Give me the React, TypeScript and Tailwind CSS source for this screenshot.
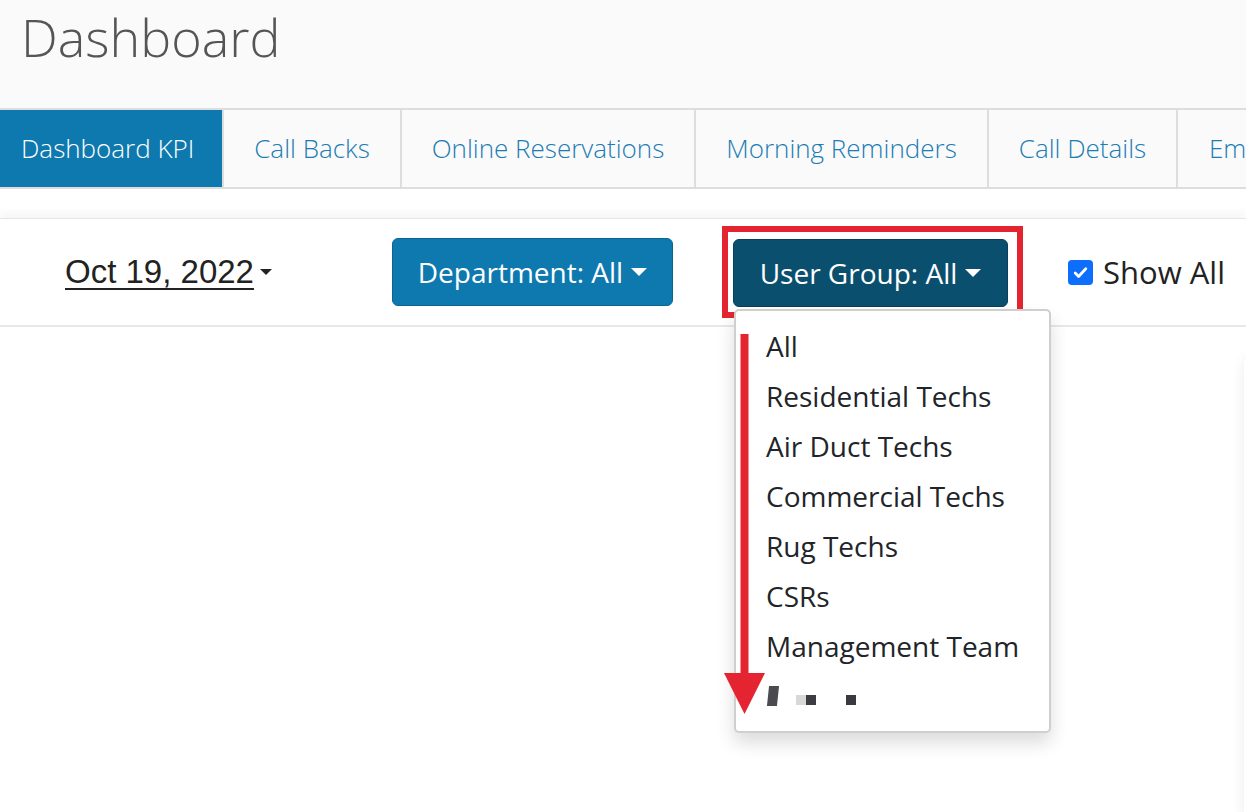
import React from 'react'

const tabs = [
  { label: 'Dashboard KPI', w: 'w-[224px] justify-start pl-[21px]', active: true },
  { label: 'Call Backs', w: 'w-[178px] justify-center' },
  { label: 'Online Reservations', w: 'w-[294px] justify-center' },
  { label: 'Morning Reminders', w: 'w-[293px] justify-center' },
  { label: 'Call Details', w: 'w-[189px] justify-center' },
  { label: 'Employee Stats', w: 'w-[240px] justify-start pl-[31px]' },
]

const groups = [
  'All',
  'Residential Techs',
  'Air Duct Techs',
  'Commercial Techs',
  'Rug Techs',
  'CSRs',
  'Management Team',
]

function Caret({ className }: { className: string }) {
  return <span className={`inline-block border-x-transparent border-b-0 ${className}`} />
}

export default function App() {
  return (
    <div className="w-[1246px] h-[812px] overflow-hidden bg-white font-['Open_Sans',sans-serif]">
      <header className="h-[108px] bg-[#fafafa] pl-[21px] pt-[4px]">
        <h1 className="text-[52px] leading-[66px] font-light text-[#555]">Dashboard</h1>
      </header>

      <nav className="flex h-[81px] border-y-2 border-[#dddddd] bg-[#fafafa] overflow-hidden">
        {tabs.map((t) => (
          <div
            key={t.label}
            className={`${t.w} shrink-0 flex items-center border-r-2 border-[#dddddd] text-[26px] font-light whitespace-nowrap ${
              t.active ? 'bg-[#0e79ae] text-white border-r-0' : 'text-[#1b7db5]'
            }`}
          >
            {t.label}
          </div>
        ))}
      </nav>

      <div className="h-[29px] bg-white" />

      <div className="relative h-[109px] flex items-center bg-white border-t border-[#e6e6e6] border-b-2 border-b-[#e8e8e8] shadow-[0_-6px_8px_rgba(0,0,0,0.035)]">
        <div className="ml-[65px] flex items-center gap-[6px] text-[33px] font-['Liberation_Sans',Arial,sans-serif] text-[#222]">
          <span className="underline underline-offset-[5px] decoration-[2px]">Oct 19, 2022</span>
          <Caret className="border-t-[6px] border-x-[6px] border-t-[#222]" />
        </div>

        <button className="ml-[120px] h-[68px] w-[281px] flex items-center justify-center gap-[8px] rounded-[6px] border border-[#0a6592] bg-[#0e79ae] text-white text-[28px]">
          Department: All
          <Caret className="border-t-[8px] border-x-[8px] border-t-white" />
        </button>

        <div className="ml-[49px] border-[6px] border-[#e52431] pt-[7px] pb-[5px] pl-[5px] pr-[9px]">
          <button className="h-[68px] w-[275px] flex items-center justify-center gap-[8px] rounded-[6px] border border-[#093f58] bg-[#0a506e] text-white text-[28px]">
            User Group: All
            <Caret className="border-t-[8px] border-x-[8px] border-t-white" />
          </button>
        </div>

        <label className="ml-[45px] flex items-center gap-[10px] text-[31px] text-[#222]">
          <span className="w-[25px] h-[25px] rounded-[4px] bg-[#0d6efd] flex items-center justify-center">
            <svg width="17" height="17" viewBox="0 0 16 16">
              <path d="M3 8.5l3.2 3.2L13 4.5" fill="none" stroke="white" strokeWidth="2.6" strokeLinecap="round" strokeLinejoin="round" />
            </svg>
          </span>
          Show All
        </label>

        <div className="absolute left-[734px] top-[90px] z-10 w-[317px] h-[424px] rounded-[5px] border-2 border-[#cfcfcf] bg-white shadow-[0_10px_18px_rgba(0,0,0,0.14)] pt-[10px]">
          {groups.map((g) => (
            <div key={g} className="h-[50px] pl-[30px] flex items-center text-[28px] text-[#212529] whitespace-nowrap">
              {g}
            </div>
          ))}
          <div className="h-[50px] pl-[32px] flex items-center">
            <span className="w-[10px] h-[20px] bg-[#4a4a4f] -skew-x-6" />
            <span className="ml-[18px] w-[10px] h-[10px] mt-[8px] bg-[#d8d8d8]" />
            <span className="w-[10px] h-[10px] mt-[8px] bg-[#3c3c42]" />
            <span className="ml-[30px] w-[10px] h-[10px] mt-[8px] bg-[#3a3a40]" />
          </div>
        </div>

        <svg className="absolute left-[722px] top-[115px] z-20" width="46" height="382" viewBox="0 0 46 382">
          <rect x="18.5" y="0" width="8" height="342" fill="#e52431" />
          <polygon points="2,339 43,339 22.5,380" fill="#e52431" />
        </svg>
      </div>

      <div className="flex justify-end pt-[33px]">
        <div className="w-[40px] h-[460px] -mr-[38px] bg-white shadow-[0_0_14px_rgba(0,0,0,0.08)]" />
      </div>
    </div>
  )
}
